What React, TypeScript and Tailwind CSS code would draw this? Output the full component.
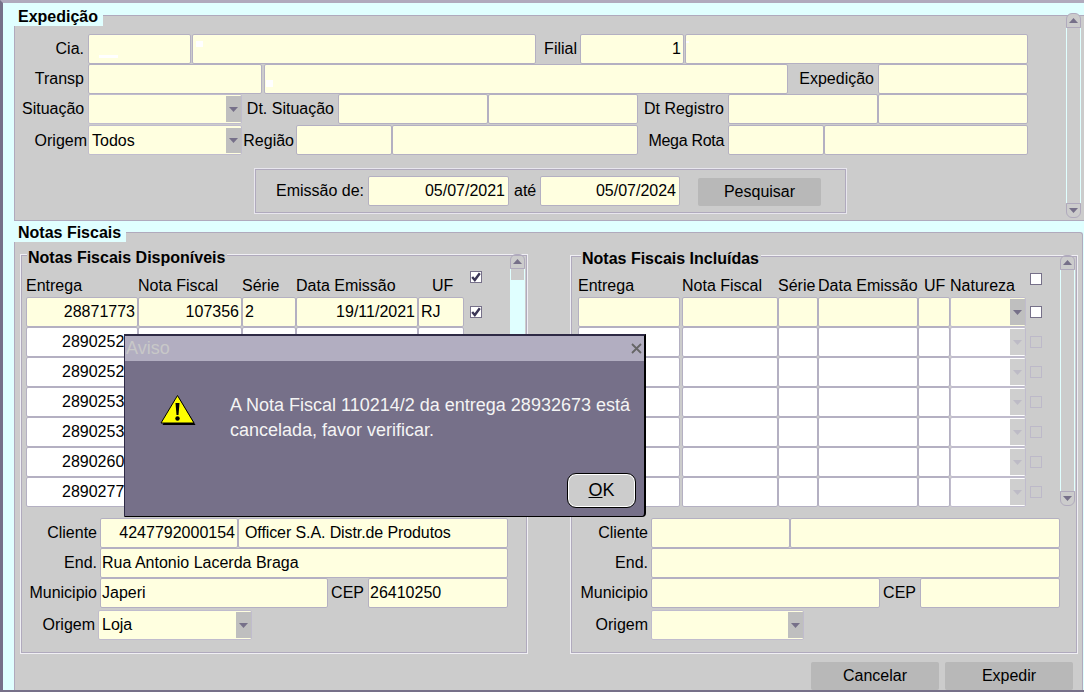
import React from "react";

const FIELD = "h-[30px] shrink-0 border border-[#b4b0c2] rounded-[2px] bg-[#ffffe0] flex items-center px-[3px] text-[16px] leading-none whitespace-nowrap overflow-hidden relative";

function F({ c = "", v, r, children }: { c?: string; v?: string; r?: boolean; children?: React.ReactNode }) {
  return <div className={`${FIELD} ${r ? "justify-end pr-[2px]" : ""} ${c}`}>{v}{children}</div>;
}

function L({ c = "", t }: { c?: string; t: string }) {
  return <div className={`shrink-0 text-right text-[16px] leading-[30px] whitespace-nowrap ${c}`}>{t}</div>;
}

function Arrow({ up, muted }: { up?: boolean; muted?: boolean }) {
  return (
    <svg width="9" height="5" viewBox="0 0 9 5" className={up ? "rotate-180" : ""}>
      <path d="M0 0h9L4.5 5z" fill={muted ? "#bdbbc6" : "#767089"} />
    </svg>
  );
}

function Sel({ c = "", v, white, off }: { c?: string; v?: string; white?: boolean; off?: boolean }) {
  return (
    <div className={`h-[30px] shrink-0 border border-[#c0bccd] rounded-[2px] flex items-stretch overflow-hidden ${white ? "bg-white" : "bg-[#ffffe0]"} ${c}`}>
      <div className="flex-1 flex items-center pl-[3px] text-[16px] leading-none">{v}</div>
      <div className={`w-[15px] flex items-center justify-center mt-[1px] mb-[1px] ${off ? "bg-[#cfcfcf]" : "bg-[#bfbfbf]"}`}>
        <Arrow muted={off} />
      </div>
    </div>
  );
}

function Check({ on, off, c = "" }: { on?: boolean; off?: boolean; c?: string }) {
  return (
    <div className={`w-[12px] h-[12px] shrink-0 border flex items-center justify-center ${off ? "border-[#bdb9c9] bg-[#cccccc]" : "border-[#767089] bg-white"} ${c}`}>
      {on && (
        <svg width="10" height="10" viewBox="0 0 10 10">
          <path d="M1.2 5 L3.8 8 L8.8 1.2" fill="none" stroke="#3b3656" strokeWidth="2.4" />
        </svg>
      )}
    </div>
  );
}

function ScrollCap({ up }: { up?: boolean }) {
  return (
    <div className={`h-[15px] w-full shrink-0 border border-[#b0aabd] bg-[#cccccc] flex items-center justify-center ${up ? "rounded-t-[6px]" : "rounded-b-[6px]"}`}>
      <Arrow up={up} />
    </div>
  );
}

function Scroll({ c = "", fill }: { c?: string; fill?: boolean }) {
  return (
    <div className={`w-[15px] shrink-0 flex flex-col ${c}`}>
      <ScrollCap up />
      {fill ? (
        <div className="flex-1 bg-[#e0ffff]">
          <div className="h-[11px] mx-px bg-[#cccccc]" />
        </div>
      ) : (
        <div className="flex-1 border-x border-[#e0ffff]" />
      )}
      <ScrollCap />
    </div>
  );
}

function Title({ t, c = "" }: { t: string; c?: string }) {
  return <div className={`absolute font-bold text-[16px] leading-[18px] whitespace-nowrap ${c}`}>{t}</div>;
}

function Speck({ c }: { c: string }) {
  return <span className={`absolute bg-white ${c}`} />;
}

const leftRows = ["28871773", "2890252", "2890252", "2890253", "2890253", "2890260", "2890277"];

function Dialog() {
  return (
    <div className="absolute left-[121px] top-[331px] w-[522px] h-[183px] bg-[#767089] border-t-2 border-t-[#2e2a45] border-r-2 border-r-black border-b border-b-black border-l border-l-[#2e2a45] rounded-br-[4px] flex flex-col">
      <div className="h-[25px] shrink-0 bg-[#b2aec1] flex items-center justify-between pl-[1px] pr-[2px] text-[18px] text-[#c8c8c8]">
        <span>Aviso</span>
        <svg width="11" height="11" viewBox="0 0 11 11">
          <path d="M1 1l9 9M10 1l-9 9" stroke="#666" strokeWidth="1.8" />
        </svg>
      </div>
      <div className="flex-1 flex relative">
        <svg width="36" height="32" viewBox="0 0 36 32" className="mt-[33px] ml-[35px] shrink-0">
          <path d="M18 1.5 L35 29.5 H2 Z" fill="black" transform="translate(0.5 1.5)" />
          <path d="M17.5 1.5 L34 29 H1 Z" fill="#ffff00" stroke="black" strokeWidth="1" />
          <path d="M15.5 9h4l-1 12h-2z" fill="black" />
          <circle cx="17.5" cy="24.5" r="2.2" fill="black" />
        </svg>
        <div className="ml-[34px] mt-[32px] text-[#f4f4f4] text-[18px] leading-[25px] whitespace-nowrap">
          <div>A Nota Fiscal 110214/2 da entrega 28932673 está</div>
          <div>cancelada, favor verificar.</div>
        </div>
        <div className="absolute left-[442px] top-[112px] w-[69px] h-[35px] rounded-[9px] border border-black bg-[#cccccc] shadow-[inset_0_0_0_1px_#ffffff] flex items-center justify-center text-[18px] text-black">
          <span><span className="underline">O</span>K</span>
        </div>
      </div>
    </div>
  );
}

export default function App() {
  return (
    <div className="relative w-[1084px] h-[692px] overflow-hidden bg-[#e0ffff] border-t-[3px] border-t-[#b0aabd] border-l-[3px] border-l-[#767089] border-b-2 border-b-[#767089] text-black font-['Liberation_Sans',Arial,sans-serif] flex flex-col">
      {/* Expedição */}
      <div className="relative mt-[12px] ml-[11px] h-[206px] shrink-0 bg-[#cccccc] border-t border-b border-[#b0aabd] border-l flex justify-between">
        <div className="absolute -top-[9px] -left-px w-[89px] h-[19px] bg-[#e0ffff] pl-[4px]">
          <Title t="Expedição" c="top-px" />
        </div>
        <div className="pl-[7px] pt-[18px] flex flex-col">
          <div className="flex">
            <L c="w-[62px]" t="Cia." />
            <F c="w-[103px] ml-[4px]"><Speck c="left-[10px] bottom-[5px] w-[19px] h-[3px]" /></F>
            <F c="w-[344px] ml-px"><Speck c="left-[3px] top-[6px] w-[7px] h-[6px]" /></F>
            <L c="w-[41px]" t="Filial" />
            <F c="w-[104px] ml-[3px]" v="1" r />
            <F c="w-[343px] ml-px"><Speck c="left-0 top-[6px] w-[3px] h-[2px]" /></F>
          </div>
          <div className="flex">
            <L c="w-[62px]" t="Transp" />
            <F c="w-[174px] ml-[4px]" />
            <F c="w-[524px] ml-[2px]"><Speck c="left-[1px] top-[15px] w-[7px] h-[7px]" /></F>
            <L c="w-[86px]" t="Expedição" />
            <F c="w-[150px] ml-[4px]" />
          </div>
          <div className="flex">
            <L c="w-[62px]" t="Situação" />
            <Sel c="w-[154px] ml-[4px]" />
            <L c="w-[92px]" t="Dt. Situação" />
            <F c="w-[150px] ml-[4px]" />
            <F c="w-[150px]" />
            <L c="w-[86px]" t="Dt Registro" />
            <F c="w-[150px] ml-[4px]" />
            <F c="w-[150px]" />
          </div>
          <div className="flex mt-px">
            <L c="w-[65px] pt-px" t="Origem" />
            <Sel c="w-[154px] ml-px pt-px" v="Todos" />
            <L c="w-[52px] pt-px" t="Região" />
            <F c="w-[96px] ml-[2px]" />
            <F c="w-[246px]" />
            <L c="w-[86px] pt-px tracking-[-0.3px]" t="Mega Rota" />
            <F c="w-[96px] ml-[4px]" />
            <F c="w-[204px]" />
          </div>
          <div className="mt-[12px] ml-[232px] w-[593px] h-[46px] border border-[#e8e6ee] outline outline-1 outline-[#b0aabd] -outline-offset-2 flex items-center pl-[21px]">
            <L c="w-[88px]" t="Emissão de:" />
            <F c="w-[141px] ml-[4px] pr-[3px]" v="05/07/2021" r />
            <L c="w-[22px] ml-[5px] mr-[4px]" t="até" />
            <F c="w-[140px] pr-[3px]" v="05/07/2024" r />
            <div className="ml-[18px] mt-[2px] w-[123px] h-[28px] bg-[#b8b8b8] rounded-[2px] flex items-center justify-center text-[16px]">Pesquisar</div>
          </div>
        </div>
        <Scroll c="-mt-[3px] mb-[2px] mr-[3px]" />
      </div>

      {/* Notas Fiscais */}
      <div className="relative mt-[11px] ml-[11px] mr-[1px] flex-1 bg-[#cccccc] border-t border-l border-r border-[#b0aabd] rounded-tr-[3px] pl-[5px]">
        <div className="absolute -top-[10px] -left-px w-[112px] h-[19px] bg-[#e0ffff] pl-[4px]">
          <Title t="Notas Fiscais" c="top-px" />
        </div>

        <div className="flex mt-[21px]">
          {/* Disponíveis */}
          <div className="relative w-[508px] h-[400px] shrink-0 border border-[#f0eff4] outline outline-1 outline-[#b0aabd] -outline-offset-2 flex">
            <Title t="Notas Fiscais Disponíveis" c="-top-[6px] left-[6px] bg-[#cccccc] pl-px pr-[2px]" />
            <div className="w-[489px] shrink-0 pl-[5px]">
              <div className="h-[42px] flex items-end pb-px text-[16px] leading-[20px] relative">
                <div className="w-[112px] shrink-0">Entrega</div>
                <div className="w-[104px] shrink-0">Nota Fiscal</div>
                <div className="w-[54px] shrink-0">Série</div>
                <div className="w-[122px] shrink-0">Data Emissão</div>
                <div className="w-[46px] shrink-0 pl-[14px]">UF</div>
                <Check on c="self-start mt-[16px] ml-[6px]" />
              </div>
              {leftRows.map((v, i) => (
                <div key={i} className="flex items-center">
                  {i === 0 ? (
                    <F c="w-[112px]" v={v} r />
                  ) : (
                    <F c="w-[112px] bg-white pl-[35px]" v={v} />
                  )}
                  <F c={`w-[104px] ${i ? "bg-white" : ""}`} v={i ? "" : "107356"} r />
                  <F c={`w-[54px] pl-[2px] ${i ? "bg-white" : ""}`} v={i ? "" : "2"} />
                  <F c={`w-[122px] ${i ? "bg-white" : ""}`} v={i ? "" : "19/11/2021"} r />
                  <F c={`w-[46px] pl-[2px] ${i ? "bg-white" : ""}`} v={i ? "" : "RJ"} />
                  <Check on c="ml-[6px]" />
                </div>
              ))}
              <div className="flex mt-[11px]">
                <L c="w-[71px]" t="Cliente" />
                <F c="w-[138px] ml-[3px]" v="4247792000154" r />
                <F c="w-[270px] pl-[6px] tracking-[-0.1px]" v="Officer S.A. Distr.de Produtos" />
              </div>
              <div className="flex">
                <L c="w-[71px]" t="End." />
                <F c="w-[408px] ml-[3px] pl-px" v="Rua Antonio Lacerda Braga" />
              </div>
              <div className="flex">
                <L c="w-[71px]" t="Municipio" />
                <F c="w-[228px] ml-[3px] pl-px" v="Japeri" />
                <L c="w-[36px]" t="CEP" />
                <F c="w-[140px] ml-[4px] pl-px" v="26410250" />
              </div>
              <div className="flex mt-[2px]">
                <L c="w-[69px]" t="Origem" />
                <Sel c="w-[154px] ml-[3px]" v="Loja" />
              </div>
            </div>
            <Scroll fill c="h-[253px] -mt-px" />
          </div>

          {/* Incluídas */}
          <div className="relative ml-[42px] mt-[1px] w-[508px] h-[399px] shrink-0 border border-[#f0eff4] outline outline-1 outline-[#b0aabd] -outline-offset-2 flex">
            <Title t="Notas Fiscais Incluídas" c="-top-[6px] left-[10px] bg-[#cccccc] pl-px pr-[2px]" />
            <div className="w-[489px] shrink-0 pl-[7px]">
              <div className="h-[41px] flex items-end pb-px text-[16px] leading-[20px]">
                <div className="w-[104px] shrink-0">Entrega</div>
                <div className="w-[96px] shrink-0">Nota Fiscal</div>
                <div className="w-[40px] shrink-0">Série</div>
                <div className="w-[106px] shrink-0">Data Emissão</div>
                <div className="w-[26px] shrink-0">UF</div>
                <div className="w-[80px] shrink-0">Natureza</div>
                <Check c="self-start mt-[17px]" />
              </div>
              {leftRows.map((_, i) => (
                <div key={i} className="flex items-center">
                  <F c={`w-[102px] ${i ? "bg-white" : ""}`} />
                  <F c={`w-[96px] ml-[2px] ${i ? "bg-white" : ""}`} />
                  <F c={`w-[40px] ${i ? "bg-white" : ""}`} />
                  <F c={`w-[100px] ${i ? "bg-white" : ""}`} />
                  <F c={`w-[32px] ${i ? "bg-white" : ""}`} />
                  <Sel c="w-[76px]" white={i > 0} off={i > 0} />
                  <Check off={i > 0} c="ml-[4px]" />
                </div>
              ))}
              <div className="flex mt-[11px]">
                <L c="w-[70px]" t="Cliente" />
                <F c="w-[139px] ml-[3px]" />
                <F c="w-[270px]" />
              </div>
              <div className="flex">
                <L c="w-[70px]" t="End." />
                <F c="w-[409px] ml-[3px]" />
              </div>
              <div className="flex">
                <L c="w-[70px]" t="Municipio" />
                <F c="w-[229px] ml-[3px]" />
                <L c="w-[36px]" t="CEP" />
                <F c="w-[140px] ml-[4px]" />
              </div>
              <div className="flex mt-[2px]">
                <L c="w-[70px]" t="Origem" />
                <Sel c="w-[153px] ml-[3px]" />
              </div>
            </div>
            <Scroll c="h-[251px] -mt-px" />
          </div>
        </div>

        <div className="flex justify-end gap-[6px] mt-[8px] mr-[9px]">
          <div className="w-[128px] h-[28px] bg-[#b8b8b8] rounded-[2px] flex items-center justify-center text-[16px]">Cancelar</div>
          <div className="w-[128px] h-[28px] bg-[#b8b8b8] rounded-[2px] flex items-center justify-center text-[16px]">Expedir</div>
        </div>
      </div>

      <Dialog />
    </div>
  );
}
